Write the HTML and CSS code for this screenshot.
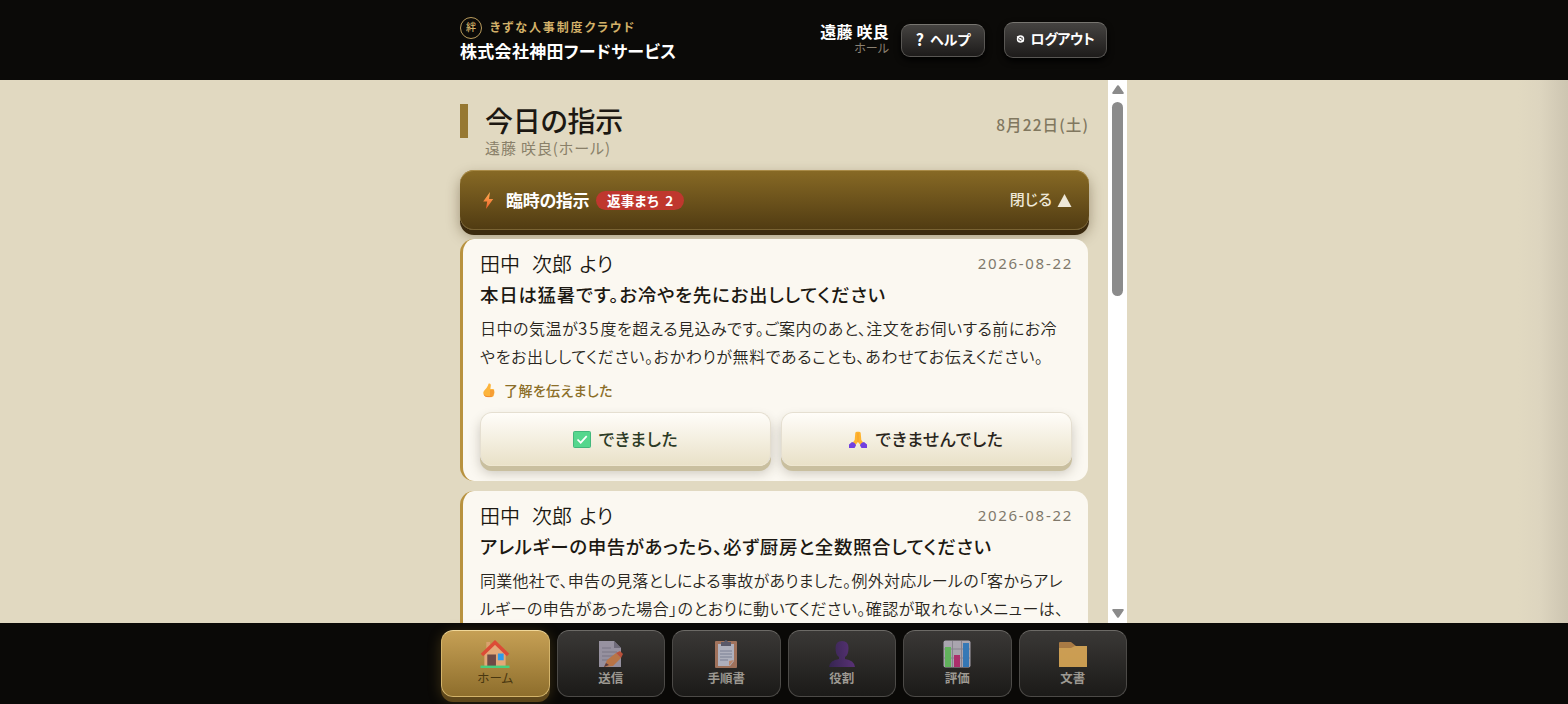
FILE: index.html
```
<!DOCTYPE html>
<html lang="ja">
<head>
    <meta charset="UTF-8">
    <meta name="viewport" content="width=device-width, initial-scale=1.0">
    <title>きずな人事制度クラウド</title>
    <link rel="stylesheet" href="styles.css">
</head>
<body>

    <header class="site-header">
        <div class="header-inner">
            <div class="company">
                <div class="brand"><span class="brand-mark">絆</span><span class="brand-name">きずな人事制度クラウド</span></div>
                <div class="company-name">株式会社神田フードサービス</div>
            </div>
            <div class="account">
                <div class="user">
                    <div class="user-name">遠藤 咲良</div>
                    <div class="user-role">ホール</div>
                </div>
                <button class="dark-button help"><span class="question">?</span><span>ヘルプ</span></button>
                <button class="dark-button logout">
                    <svg width="9" height="10" viewBox="0 0 9 10" fill="none" stroke="#fff"><ellipse cx="4.5" cy="6" rx="3" ry="3" stroke-width="1.500"/><path d="M1 3.500l6.500 5M3.500 7.500l2-3" stroke-width="1.100"/></svg>
                    <span>ログアウト</span>
                </button>
            </div>
        </div>
    </header>

    <main class="main">
        <div class="content">
            <div class="page-title">
                <div class="title-bar"></div>
                <div class="title-text">
                    <h1>今日の指示</h1>
                    <p>遠藤 咲良(ホール)</p>
                </div>
                <div class="today">8月22日(土)</div>
            </div>

            <button class="urgent">
                <svg class="bolt" width="12" height="18" viewBox="0 0 12 18"><defs><linearGradient id="bolt" x1="0" y1="0" x2="0" y2="1"><stop offset="0" stop-color="#ffb052"/><stop offset="1" stop-color="#f0602c"/></linearGradient></defs><path d="M8 1L1.200 10.500h4L4 18 11.200 8H7z" fill="url(#bolt)"/></svg>
                <span class="urgent-title">臨時の指示</span>
                <span class="badge">返事まち 2</span>
                <span class="close">閉じる</span>
                <svg class="triangle" width="15" height="13" viewBox="0 0 15 13"><path d="M7.500 0L14.500 13H.5z" fill="#eee8d8"/></svg>
            </button>

            <article class="card">
                <div class="card-head"><span class="from">田中<span class="name-gap">　</span>次郎 より</span><time>2026-08-22</time></div>
                <h2 class="t1">本日は猛暑です。お冷やを先にお出ししてください</h2>
                <div class="card-body">
                    <div class="b1">日中の気温が<span class="number">35</span>度を超える見込みです。ご案内のあと、注文をお伺いする前にお冷</div>
                    <div class="b2">やをお出ししてください。おかわりが無料であることも、あわせてお伝えください。</div>
                </div>
                <div class="status">
                    <svg width="14" height="15" viewBox="0 0 14 15"><path d="M6.500.8c1.500-.8 2.600.3 2.300 2L8.400 6h2.500c1.200 0 1.800 1.200 1.100 2 .8.600.7 1.600.1 2.100.5.900.1 1.600-.5 1.900.2 1.300-.7 2-1.700 2H5.500C2.800 14 1.300 12.200 1.300 10c0-2.400 4.500-5 5.200-9.200z" fill="#fcb43c"/><path d="M8 8h4M8 10h4M8 12h3.500M2.200 12c1.500 2 3.500 1.700 7.500 1.600" fill="none" stroke="#ee7d2c" stroke-width=".8"/></svg>
                    <span>了解を伝えました</span>
                </div>
                <div class="answers">
                    <button class="answer done">
                        <svg width="18" height="17" viewBox="0 0 18 17"><rect x=".5" y=".5" width="17" height="16" rx="1" fill="#55d78d" stroke="#43b77c"/><path d="M4.500 8.500l3.200 3.200 6-6.500" fill="none" stroke="#fff" stroke-width="1.700"/></svg>
                        <span>できました</span>
                    </button>
                    <button class="answer undone">
                        <svg width="18" height="17" viewBox="0 0 18 17"><path d="M6.300 2Q6.500.5 8.800.8 11.500.5 11.700 2l.6 7 2.200 3-3 2-2.600-3L6.500 14l-3-2L5.700 9z" fill="#ffb42e"/><path d="M9 2v9" stroke="#ef932d" stroke-width=".6"/><path d="M3 11q3.500.5 4 3.500L5.500 17H0v-3.500zM15 11q-3.500.5-4 3.500l1.500 2.500H18v-3.500z" fill="#7140e0"/></svg>
                        <span>できませんでした</span>
                    </button>
                </div>
            </article>

            <article class="card">
                <div class="card-head"><span class="from">田中<span class="name-gap">　</span>次郎 より</span><time>2026-08-22</time></div>
                <h2 class="t2">アレルギーの申告があったら、必ず厨房と全数照合してください</h2>
                <div class="card-body">
                    <div class="b3">同業他社で、申告の見落としによる事故がありました。例外対応ルールの「客からアレ</div>
                    <div class="b4">ルギーの申告があった場合」のとおりに動いてください。確認が取れないメニューは、</div>
                </div>
            </article>
        </div>
        <div class="scrollbar">
            <svg width="12" height="9" viewBox="0 0 12 9"><path d="M6 1.200L10.800 8H1.200z" fill="#8b8b8b" stroke="#8b8b8b" stroke-width="2" stroke-linejoin="round"/></svg>
            <div class="thumb"></div>
            <svg width="12" height="9" viewBox="0 0 12 9"><path d="M6 7.800L10.800 1H1.200z" fill="#8b8b8b" stroke="#8b8b8b" stroke-width="2" stroke-linejoin="round"/></svg>
        </div>
    </main>

    <nav class="bottom-nav">
        <a class="nav-item active">
            <svg width="30" height="29" viewBox="0 0 30 29"><path d="M6 2h4v8H6z" fill="#d9a26e"/><path d="M4 14L15 3l11 11v13H4z" fill="#e3a878"/><path d="M1.500 15.500L15 2.500l13.500 13" fill="none" stroke="#dc4b36" stroke-width="3.600"/><path d="M7 15h9v12H7z" fill="#6f4a46"/><path d="M18 14h6v7h-6z" fill="#2f9bea"/><path d="M0 26.500h30V29H0z" fill="#48cf7c"/></svg>
            <span>ホーム</span>
        </a>
        <a class="nav-item">
            <svg class="dim" width="26" height="28" viewBox="0 0 26 28"><path d="M1 1h15l7 7v19H1z" fill="#b3adc0"/><path d="M16 1l7 7h-7z" fill="#817c90"/><path d="M4 8h9M4 12h15M4 16h12M4 20h8" stroke="#8e899c"/><path d="M6 27l3-7 9-7 5 5-8 8z" fill="#e08a50"/><path d="M18 13l4-2 3 3-2 4z" fill="#e05b3f"/><path d="M6 27l2-4 3 2z" fill="#64424a"/></svg>
            <span>送信</span>
        </a>
        <a class="nav-item">
            <svg class="dim" width="22" height="28" viewBox="0 0 22 28"><rect x="0" y="1" width="22" height="27" rx="1" fill="#c0866a"/><path d="M3 4h16v17l-4 5H3z" fill="#d3d5e6"/><path d="M19 20l-5 6v-5z" fill="#e3a17e"/><path d="M6 2h3q2-4 4 0h3v4H6z" fill="#66657a"/><path d="M5 11h12M5 14h12M5 17h12M5 20h8" stroke="#8e95b0"/></svg>
            <span>手順書</span>
        </a>
        <a class="nav-item">
            <svg class="dim" width="26" height="28" viewBox="0 0 26 28"><defs><linearGradient id="person"><stop offset="0" stop-color="#39245c"/><stop offset="1" stop-color="#67348d"/></linearGradient></defs><path d="M6.500 8q0-7 6.500-7t6.500 7q0 7-3.500 9v2q9 1 10 8H0q1-7 10-8v-2q-3.500-2-3.500-9z" fill="url(#person)"/></svg>
            <span>役割</span>
        </a>
        <a class="nav-item">
            <svg class="dim" width="28" height="28" viewBox="0 0 28 28"><rect x=".5" y=".5" width="27" height="27" rx="2" fill="#cbc6d3"/><path d="M9.500 1v26M18.500 1v26M1 9h26M1 18h26" stroke="#a09aaa"/><path d="M2 7h6v20H2z" fill="#70d86a"/><path d="M11 15h6v12h-6z" fill="#d0307f"/><path d="M20 3h6v24h-6z" fill="#388ddd"/></svg>
            <span>評価</span>
        </a>
        <a class="nav-item">
            <svg class="dim" width="28" height="28" viewBox="0 0 28 28"><path d="M0 3q0-1 1-1h11l5 4h11v21H0z" fill="#c98f4a"/><path d="M0 8h12l4-2h12v21H0z" fill="#f7bd5e"/></svg>
            <span>文書</span>
        </a>
    </nav>

</body>
</html>
```
FILE: styles.css
```
* {
    box-sizing: border-box;
}
body {
    margin: 0;
    height: 704px;
    display: flex;
    flex-direction: column;
    overflow: hidden;
    font-family: "Noto Sans CJK JP", sans-serif;
    font-feature-settings: "palt";
    color: #1c1812;
    background-color: #e1d9c1;
    white-space: nowrap;
}
button {
    font-family: inherit;
    font-feature-settings: inherit;
    cursor: pointer;
}
svg {
    display: block;
    flex: none;
}
h1, h2, p {
    margin: 0;
}

/* header */
.site-header {
    height: 80px;
    flex: none;
    background-color: #0b0a08;
}
.header-inner {
    width: 647px;
    height: 80px;
    margin: 0 auto 0 460px;
    display: flex;
    justify-content: space-between;
}
.company {
    padding-top: 17px;
}
.brand {
    display: flex;
    align-items: center;
    gap: 8px;
    height: 22px;
    color: #d3b169;
}
.brand-mark {
    width: 22px;
    height: 22px;
    border: 1px solid #b99b5c;
    border-radius: 50%;
    font-size: 10px;
    line-height: 18px;
    font-weight: 500;
    text-align: center;
}
.brand-name {
    font-size: 12px;
    line-height: 18px;
    margin-top: -2px;
    font-weight: bold;
    letter-spacing: 1.9px;
}
.company-name {
    margin-top: 1px;
    font-size: 17px;
    line-height: 22px;
    font-weight: bold;
    letter-spacing: 0.3px;
    color: #fff;
}
.account {
    display: flex;
}
.user {
    width: 90px;
    padding-top: 22px;
    text-align: right;
    margin-right: 12px;
}
.user-name {
    font-size: 16px;
    line-height: 18px;
    font-weight: bold;
    letter-spacing: 0.2px;
    color: #fff;
}
.user-role {
    font-size: 12px;
    line-height: 16px;
    color: #8b8172;
}
.dark-button {
    display: flex;
    align-items: center;
    justify-content: center;
    padding: 0 0 3px;
    color: #fff;
    font-size: 14px;
    font-weight: bold;
    border: 1px solid #595754;
    border-top-color: #777570;
    border-radius: 9px;
    background: linear-gradient(#454341, #1d1b1a);
    box-shadow: 0 3px 6px #000;
}
.help {
    width: 84px;
    height: 33px;
    margin: 24px 19px 0 0;
    gap: 6px;
}
.question {
    font-size: 16px;
}
.logout {
    width: 103px;
    height: 36px;
    margin-top: 22px;
    gap: 5px;
    padding-bottom: 5px;
    letter-spacing: -0.3px;
}

/* scrolling area */
.main {
    height: 543px;
    flex: none;
    display: flex;
    overflow: hidden;
    padding-left: 460px;
    background: linear-gradient(to left, #cdc5b1, #ddd5bf 28px, #e1d9c1 50px);
}
.content {
    width: 629px;
    height: 543px;
    margin-right: 19px;
}
.scrollbar {
    width: 19px;
    height: 543px;
    padding: 5px 0;
    background-color: #fff;
    display: flex;
    flex-direction: column;
    align-items: center;
}
.thumb {
    width: 11px;
    height: 194px;
    margin: 8px 0 auto;
    border-radius: 6px;
    background-color: #8b8b8b;
}
.page-title {
    display: flex;
    height: 90px;
    padding-top: 24px;
}
.title-bar {
    width: 8px;
    height: 34px;
    margin-right: 17px;
    background-color: #967832;
}
h1 {
    font-size: 28px;
    line-height: 32px;
    margin-bottom: 2px;
    font-weight: 500;
    letter-spacing: -0.2px;
}
.title-text p {
    font-size: 15px;
    line-height: 20px;
    letter-spacing: 0.9px;
    color: #898069;
}
.today {
    margin-left: auto;
    padding-top: 9px;
    font-size: 15.5px;
    line-height: 22px;
    font-weight: 500;
    letter-spacing: 1.1px;
    color: #80775f;
}
.urgent {
    width: 629px;
    height: 60px;
    margin-bottom: 9px;
    padding: 0 17px 0 22px;
    display: flex;
    align-items: center;
    color: #fff;
    border: 0;
    border-radius: 14px;
    background: linear-gradient(#886a25, #503b12);
    box-shadow: inset 0 1px 0 #a98b48, inset 0 -1px 0 #796333, 0 5px 0 #3b2a0e, 0 6px 14px rgba(60, 40, 10, 0.4);
}
.urgent-title {
    margin: -2px 7px 0 12px;
    font-size: 17px;
    font-weight: bold;
    letter-spacing: -0.3px;
}
.badge {
    width: 88px;
    height: 19px;
    border-radius: 10px;
    background-color: #bf372e;
    font-size: 13.5px;
    line-height: 18px;
    font-weight: bold;
    letter-spacing: 0.3px;
    word-spacing: 3px;
    text-align: center;
}
.close {
    margin: -3px 5px 0 auto;
    font-size: 15px;
    font-weight: 500;
    letter-spacing: 0.2px;
    color: #eee8d8;
}

/* instruction cards */
.card {
    width: 628px;
    height: 242px;
    margin-bottom: 10px;
    padding: 10px 16px 0 17px;
    border-left: 3px solid #b8923f;
    border-radius: 14px;
    background-color: #fbf8f1;
    overflow: hidden;
}
.card-head {
    display: flex;
    align-items: center;
    justify-content: space-between;
    height: 28px;
}
.from {
    font-size: 20px;
    font-weight: 350;
    word-spacing: 3px;
}
.name-gap {
    letter-spacing: -8px;
}
time {
    font-family: "Noto Sans", sans-serif;
    font-size: 15px;
    letter-spacing: 1.7px;
    margin-right: -1px;
    color: #80786b;
}
h2 {
    margin-top: 2px;
    font-size: 18.5px;
    line-height: 30px;
    font-weight: 500;
}
.t1 {
    letter-spacing: 0.7px;
}
.t2 {
    letter-spacing: 0.58px;
}
.card-body {
    margin-top: 5px;
    font-size: 16px;
    line-height: 28px;
    font-weight: 350;
    color: #292620;
}
.b1 {
    letter-spacing: 0.5px;
}
.b2 {
    letter-spacing: 0.6px;
}
.b3 {
    letter-spacing: 0.28px;
}
.b4 {
    letter-spacing: 0.4px;
}
.number {
    font-size: 17px;
    letter-spacing: 1.8px;
}
.status {
    display: flex;
    align-items: center;
    gap: 8px;
    height: 26px;
    margin: 7px 0 0 2px;
    font-size: 14px;
    font-weight: 500;
    letter-spacing: 0.4px;
    color: #8b6e28;
}
.answers {
    display: flex;
    gap: 10px;
    margin-top: 9px;
}
.answer {
    flex: 1;
    height: 54px;
    display: flex;
    align-items: center;
    justify-content: center;
    gap: 8px;
    padding: 0;
    border: 1px solid #e5dfd1;
    border-bottom-color: #eee6cf;
    border-radius: 12px;
    background: linear-gradient(#fffdf9, #e9e1c8);
    box-shadow: 0 5px 0 #c9bf9f, 0 7px 12px rgba(60, 50, 30, 0.25);
    font-size: 17px;
    font-weight: 500;
    letter-spacing: 0.6px;
    color: #29251c;
}
.answer span {
    margin-top: -1px;
}
.done {
    color: #2c3a25;
}

/* bottom navigation */
.bottom-nav {
    height: 81px;
    flex: none;
    padding: 7px 441px 0;
    display: flex;
    gap: 7px;
    background-color: #0a0907;
}
.nav-item {
    flex: 1;
    height: 67px;
    padding-top: 9px;
    display: flex;
    flex-direction: column;
    align-items: center;
    border: 1px solid #4c4a47;
    border-top-color: #6c6a66;
    border-radius: 12px;
    background: linear-gradient(#3a3836, #1b1a18);
    font-size: 12.5px;
    line-height: 19px;
    font-weight: bold;
    color: #9d9992;
}
.nav-item svg {
    height: 28px;
}
.dim {
    opacity: 0.78;
}
.active {
    color: #493710;
    font-weight: 400;
    border-color: #d4b46a;
    border-top-color: #f0d798;
    background: linear-gradient(#c6a055, #8e6e2c);
    box-shadow: 0 5px 0 #5e471b, 0 3px 14px rgba(180, 140, 50, 0.3);
}
```
